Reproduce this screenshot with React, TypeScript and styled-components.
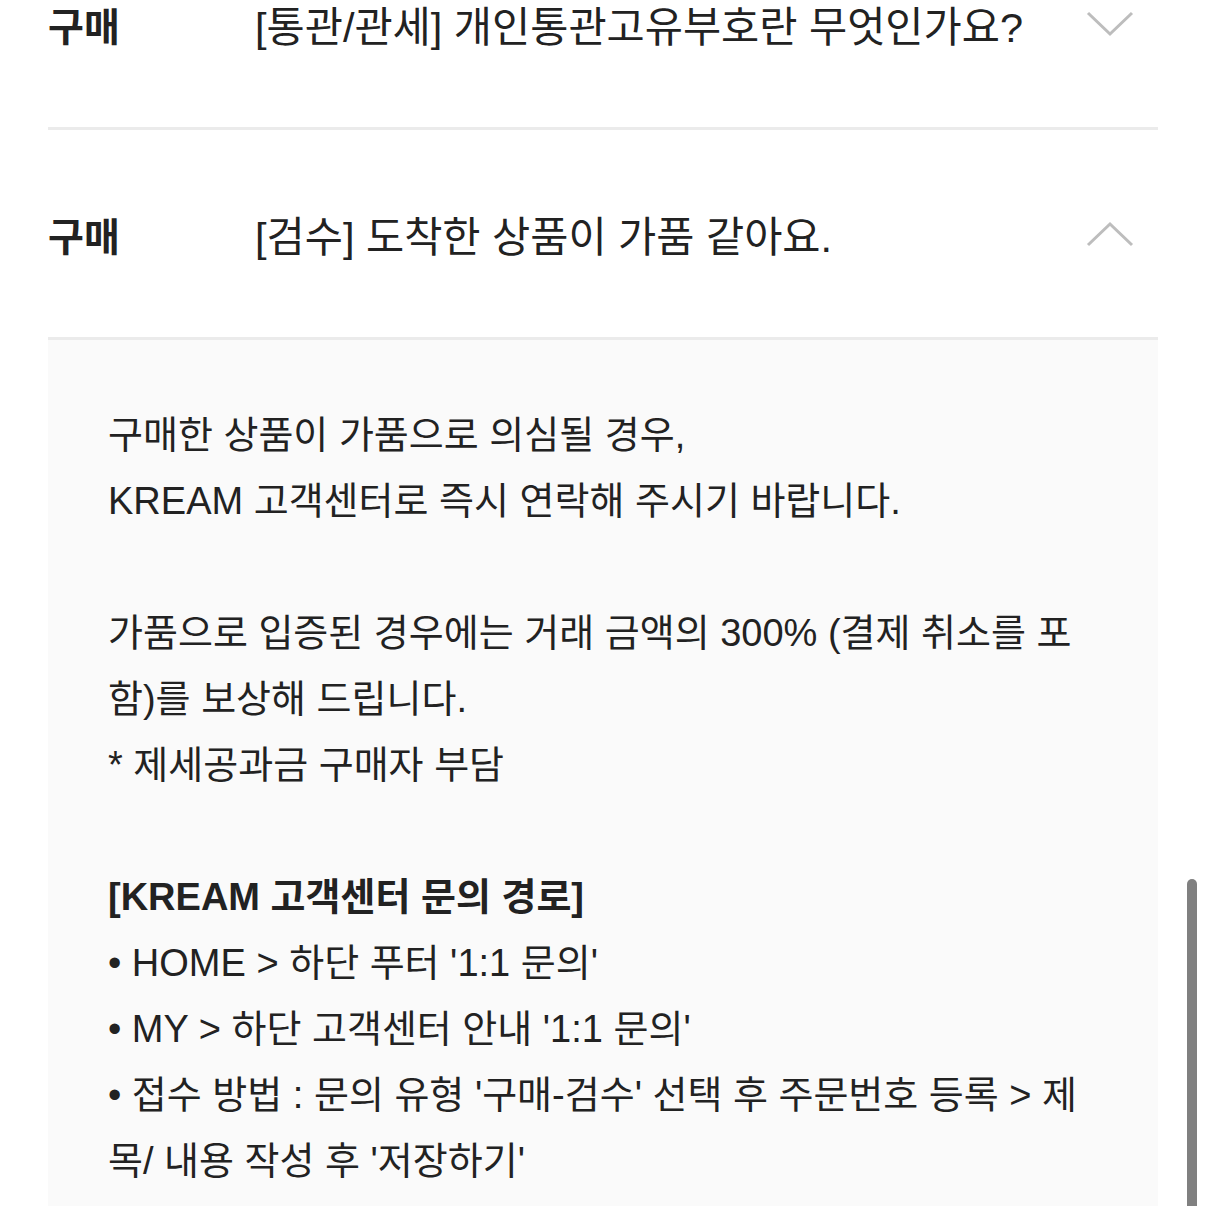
import styled, { createGlobalStyle } from 'styled-components';

const GlobalStyle = createGlobalStyle`
  html, body {
    margin: 0;
    padding: 0;
    background: #ffffff;
    overflow: hidden;
  }
  body {
    font-family: 'Liberation Sans', 'Noto Sans CJK KR', sans-serif;
    color: #222222;
  }
`;

const Page = styled.div`
  width: 1206px;
  height: 1206px;
  overflow: hidden;
  position: relative;
  box-sizing: border-box;
  padding: 0 48px;
`;

const List = styled.ul`
  list-style: none;
  margin: -80px 0 0;
  padding: 0;
`;

const Item = styled.li`
  border-bottom: 3px solid #ebebeb;
`;

const Question = styled.div`
  height: 207px;
  display: flex;
  align-items: center;
`;

const Category = styled.span`
  width: 207px;
  flex-shrink: 0;
  font-size: 39px;
  font-weight: 700;
  color: #222222;
`;

const Title = styled.span`
  flex: 1;
  font-size: 41.5px;
  color: #222222;
  white-space: nowrap;
`;

const Chevron = styled.svg`
  width: 48px;
  height: 26px;
  margin-right: 24px;
  flex-shrink: 0;
`;

const Answer = styled.div`
  background: #fafafa;
  padding: 62px 60px 60px;
  font-size: 38px;
  line-height: 66px;
  color: #222222;
  white-space: nowrap;
`;

const Strong = styled.b`
  font-weight: 700;
`;

const Scrollbar = styled.div`
  position: absolute;
  right: 9px;
  top: 879px;
  width: 10px;
  height: 400px;
  border-radius: 5px;
  background: #808080;
`;

function Arrow({ up }: { up?: boolean }) {
  return (
    <Chevron viewBox="0 0 48 26">
      <polyline
        points={up ? '2,24 24,3 46,24' : '2,2 24,23 46,2'}
        fill="none"
        stroke="#bdbdbd"
        strokeWidth={3}
      />
    </Chevron>
  );
}

function App() {
  return (
    <>
      <GlobalStyle />
      <Page>
        <List>
          <Item>
            <Question>
              <Category>구매</Category>
              <Title>[통관/관세] 개인통관고유부호란 무엇인가요?</Title>
              <Arrow />
            </Question>
          </Item>
          <Item>
            <Question>
              <Category>구매</Category>
              <Title>[검수] 도착한 상품이 가품 같아요.</Title>
              <Arrow up />
            </Question>
          </Item>
          <Answer>
            구매한 상품이 가품으로 의심될 경우,
            <br />
            KREAM 고객센터로 즉시 연락해 주시기 바랍니다.
            <br />
            <br />
            가품으로 입증된 경우에는 거래 금액의 300% (결제 취소를 포
            <br />
            함)를 보상해 드립니다.
            <br />* 제세공과금 구매자 부담
            <br />
            <br />
            <Strong>[KREAM 고객센터 문의 경로]</Strong>
            <br />• HOME &gt; 하단 푸터 '1:1 문의'
            <br />• MY &gt; 하단 고객센터 안내 '1:1 문의'
            <br />• 접수 방법 : 문의 유형 '구매-검수' 선택 후 주문번호 등록 &gt; 제
            <br />
            목/ 내용 작성 후 '저장하기'
          </Answer>
        </List>
        <Scrollbar />
      </Page>
    </>
  );
}

export default App;
